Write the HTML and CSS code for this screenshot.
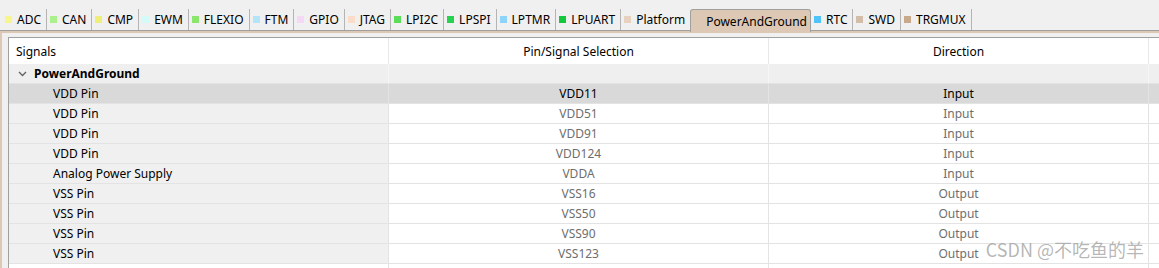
FILE: index.html
```html
<!DOCTYPE html>
<html>
<head>
<meta charset="utf-8">
<link rel="stylesheet" href="styles.css">
</head>
<body>
<div class="app">
  <div class="tabbar">
    <div class="tab first"><span class="sq" style="background:#f6f68c"></span>ADC</div>
    <div class="tab"><span class="sq" style="background:#aaf08c"></span>CAN</div>
    <div class="tab"><span class="sq" style="background:#eeee78"></span>CMP</div>
    <div class="tab"><span class="sq" style="background:#d4fafa"></span>EWM</div>
    <div class="tab"><span class="sq" style="background:#8ce66e"></span>FLEXIO</div>
    <div class="tab"><span class="sq" style="background:#b4e4fa"></span>FTM</div>
    <div class="tab"><span class="sq" style="background:#f5d8f5"></span>GPIO</div>
    <div class="tab"><span class="sq" style="background:#fadcc8"></span>JTAG</div>
    <div class="tab"><span class="sq" style="background:#5ade5a"></span>LPI2C</div>
    <div class="tab"><span class="sq" style="background:#28d250"></span>LPSPI</div>
    <div class="tab"><span class="sq" style="background:#8cd4fa"></span>LPTMR</div>
    <div class="tab"><span class="sq" style="background:#14c83c"></span>LPUART</div>
    <div class="tab before-active"><span class="sq" style="background:#e6d2be"></span>Platform</div>
    <div class="tab active"><span class="sq"></span>PowerAndGround</div>
    <div class="tab"><span class="sq" style="background:#50c4fa"></span>RTC</div>
    <div class="tab"><span class="sq" style="background:#d2bea8"></span>SWD</div>
    <div class="tab"><span class="sq" style="background:#c8aa8a"></span>TRGMUX</div>
  </div>
  <div class="pane">
    <div class="table">
      <div class="row head">
        <div class="cell left">Signals</div>
        <div class="cell">Pin/Signal Selection</div>
        <div class="cell">Direction</div>
        <div class="cell end"></div>
      </div>
      <div class="row group">
        <div class="cell left grp"><svg class="chev" width="9" height="6" viewBox="0 0 9 6"><path d="M1 1 L4.5 4.5 L8 1" fill="none" stroke="#606060" stroke-width="1.3"/></svg><b>PowerAndGround</b></div>
        <div class="cell"></div>
        <div class="cell"></div>
        <div class="cell end"></div>
      </div>
      <div class="row sel">
        <div class="cell left child">VDD Pin</div>
        <div class="cell">VDD11</div>
        <div class="cell">Input</div>
        <div class="cell end"></div>
      </div>
      <div class="row">
        <div class="cell left child">VDD Pin</div>
        <div class="cell">VDD51</div>
        <div class="cell">Input</div>
        <div class="cell end"></div>
      </div>
      <div class="row">
        <div class="cell left child">VDD Pin</div>
        <div class="cell">VDD91</div>
        <div class="cell">Input</div>
        <div class="cell end"></div>
      </div>
      <div class="row">
        <div class="cell left child">VDD Pin</div>
        <div class="cell">VDD124</div>
        <div class="cell">Input</div>
        <div class="cell end"></div>
      </div>
      <div class="row">
        <div class="cell left child">Analog Power Supply</div>
        <div class="cell">VDDA</div>
        <div class="cell">Input</div>
        <div class="cell end"></div>
      </div>
      <div class="row">
        <div class="cell left child">VSS Pin</div>
        <div class="cell">VSS16</div>
        <div class="cell">Output</div>
        <div class="cell end"></div>
      </div>
      <div class="row">
        <div class="cell left child">VSS Pin</div>
        <div class="cell">VSS50</div>
        <div class="cell">Output</div>
        <div class="cell end"></div>
      </div>
      <div class="row">
        <div class="cell left child">VSS Pin</div>
        <div class="cell">VSS90</div>
        <div class="cell">Output</div>
        <div class="cell end"></div>
      </div>
      <div class="row">
        <div class="cell left child">VSS Pin</div>
        <div class="cell">VSS123</div>
        <div class="cell">Output</div>
        <div class="cell end"></div>
      </div>
      <div class="row blank">
        <div class="cell left"></div>
        <div class="cell"></div>
        <div class="cell"></div>
        <div class="cell end"></div>
      </div>
    </div>
  </div>
  <div class="watermark">CSDN @不吃鱼的羊</div>
</div>
</body>
</html>
```
FILE: styles.css
```css
html, body {
  margin: 0;
  padding: 0;
  background: #f0f0f0;
  overflow: hidden;
}
.app {
  position: relative;
  width: 1159px;
  height: 268px;
  overflow: hidden;
  font-family: "Noto Sans", "Noto Sans CJK SC", sans-serif;
  font-size: 12px;
  color: #000;
  background: #f0f0f0;
}
.tabbar {
  display: flex;
  align-items: stretch;
  padding-top: 9px;
  height: 21px;
  border-bottom: 1px solid #a0a0a0;
}
.tab {
  display: flex;
  align-items: center;
  height: 21px;
  line-height: 21px;
  padding: 0 5px 0 3px;
  border-right: 1px solid #b4b4b4;
  white-space: nowrap;
}
.tab.first {
  padding-left: 5px;
}
.tab.before-active {
  border-right: none;
}
.sq {
  display: inline-block;
  width: 7px;
  height: 7px;
  margin-right: 5px;
  flex: none;
}
.tab.active {
  background: #dcc8b4;
  border: 1px solid #a0a0a0;
  border-bottom: none;
  border-radius: 3px 3px 0 0;
  height: 22px;
  margin-bottom: -1px;
  padding-right: 3px;
  position: relative;
}
.pane {
  border-top: 2px solid #dcc8b4;
  border-left: 2px solid #dcc8b4;
  padding: 4px 0 0 6px;
}
.table {
  background: #fff;
  border-top: 1px solid #a0a0a0;
  border-left: 1px solid #a0a0a0;
  height: 240px;
}
.row {
  display: grid;
  grid-template-columns: 380px 380px 380px 1fr;
  height: 19px;
  border-bottom: 1px solid #e3e3e3;
}
.cell {
  display: flex;
  align-items: center;
  justify-content: center;
  border-right: 1px solid #e3e3e3;
  color: #6e6e6e;
  white-space: nowrap;
  line-height: 19px;
}
.cell.left {
  justify-content: flex-start;
  background: #f0f0f0;
  color: #000;
}
.cell.end {
  border-right: none;
}
.row.head {
  height: 26px;
  border-bottom: none;
}
.row.head .cell {
  background: #fff;
  color: #000;
  border-right-color: #e8e8e8;
}
.row.head .cell.left {
  padding-left: 7px;
}
.row.group .cell {
  background: #efefef;
  border-right-color: #f6f6f6;
}
.cell.grp {
  padding-left: 9px;
}
.chev {
  margin-right: 7px;
  margin-top: 1px;
}
.cell.child {
  padding-left: 44px;
}
.row.sel .cell {
  background: #d9d9d9;
  color: #000;
  border-right-color: #e4e4e4;
}
.row.blank .cell {
  background: #fff;
}
.watermark {
  position: absolute;
  right: 15px;
  bottom: 8px;
  font-family: "Noto Sans CJK SC", "Noto Sans", sans-serif;
  font-size: 18px;
  line-height: 22px;
  color: rgba(120, 120, 120, 0.55);
  text-shadow: 0 0 1px rgba(255, 255, 255, 0.6);
}
```
